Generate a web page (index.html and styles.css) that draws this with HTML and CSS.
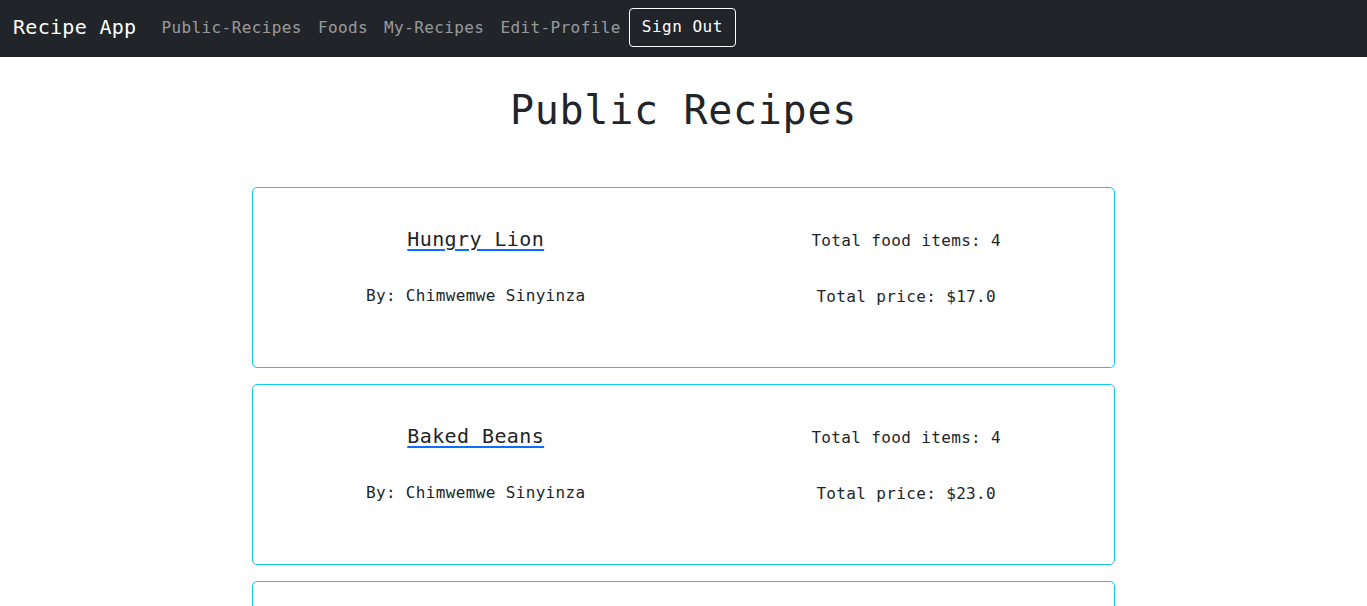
FILE: index.html
```html
<!DOCTYPE html>
<html lang="en">
<head>
<meta charset="utf-8">
<title>Recipe App</title>
<link rel="stylesheet" href="styles.css">
</head>
<body>
<nav class="navbar">
  <a class="brand" href="#">Recipe App</a>
  <ul class="nav-links">
    <li><a class="nav-link" href="#">Public-Recipes</a></li>
    <li><a class="nav-link" href="#">Foods</a></li>
    <li><a class="nav-link" href="#">My-Recipes</a></li>
    <li><a class="nav-link" href="#">Edit-Profile</a></li>
    <li><button class="btn-signout" type="button">Sign Out</button></li>
  </ul>
</nav>
<main class="main">
  <h1 class="page-title">Public Recipes</h1>
  <div class="recipe-list">
    <div class="recipe-card">
      <div class="recipe-col">
        <a class="recipe-name" href="#">Hungry Lion</a>
        <p class="recipe-text">By: Chimwemwe Sinyinza</p>
      </div>
      <div class="recipe-col recipe-col-totals">
        <p class="recipe-text">Total food items: 4</p>
        <p class="recipe-text">Total price: $17.0</p>
      </div>
    </div>
    <div class="recipe-card">
      <div class="recipe-col">
        <a class="recipe-name" href="#">Baked Beans</a>
        <p class="recipe-text">By: Chimwemwe Sinyinza</p>
      </div>
      <div class="recipe-col recipe-col-totals">
        <p class="recipe-text">Total food items: 4</p>
        <p class="recipe-text">Total price: $23.0</p>
      </div>
    </div>
    <div class="recipe-card">
      <div class="recipe-col">
        <a class="recipe-name" href="#">Pancakes</a>
        <p class="recipe-text">By: Chimwemwe Sinyinza</p>
      </div>
      <div class="recipe-col recipe-col-totals">
        <p class="recipe-text">Total food items: 3</p>
        <p class="recipe-text">Total price: $12.0</p>
      </div>
    </div>
  </div>
</main>
</body>
</html>
```

FILE: styles.css
```css
* { box-sizing: border-box; }
html, body {
  margin: 0;
  padding: 0;
  background: #fff;
  color: #212529;
  font-family: "DejaVu Sans Mono", "Liberation Mono", monospace;
  font-size: 16px;
}
.navbar {
  height: 57px;
  background: #212529;
  display: flex;
  align-items: center;
  padding: 0 12px 0 13px;
}
.brand {
  color: #fff;
  text-decoration: none;
  font-size: 20px;
  line-height: 30px;
  margin-right: 17px;
  margin-bottom: 3px;
  letter-spacing: 0.3px;
}
.nav-links {
  list-style: none;
  margin: 0;
  padding: 0;
  display: flex;
  align-items: center;
}
.nav-link {
  display: block;
  padding: 7px 8px 9px;
  color: rgba(255, 255, 255, 0.55);
  text-decoration: none;
  font-size: 16px;
  line-height: 24px;
  letter-spacing: 0.4px;
}
.btn-signout {
  height: 39px;
  width: 107px;
  padding: 0 0 2px;
  background: transparent;
  border: 1px solid #fff;
  border-radius: 4px;
  color: #fff;
  font-family: inherit;
  font-size: 16px;
  letter-spacing: 0.5px;
  cursor: pointer;
  position: relative;
  top: -1px;
}
.main {
  display: flex;
  flex-direction: column;
  align-items: center;
}
.page-title {
  margin: 29px 0 53px;
  font-size: 40px;
  line-height: 48px;
  font-weight: 500;
  letter-spacing: 0.7px;
}
.recipe-list {
  width: 863px;
  display: flex;
  flex-direction: column;
  gap: 16px;
}
.recipe-card {
  height: 181px;
  border: 1px solid #0dcaf0;
  border-radius: 5px;
  display: flex;
  justify-content: space-around;
  align-items: flex-start;
  padding: 39px 0 0;
}
.recipe-col {
  display: flex;
  flex-direction: column;
  align-items: center;
  gap: 33px;
}
.recipe-col-totals {
  padding-top: 2px;
  gap: 32px;
}
.recipe-name {
  color: #212529;
  font-size: 20px;
  line-height: 24px;
  font-weight: 500;
  text-decoration: underline;
  text-decoration-color: #0d6efd;
  text-underline-offset: 3px;
  letter-spacing: 0.4px;
}
.recipe-text {
  margin: 0;
  font-size: 16px;
  line-height: 24px;
  letter-spacing: 0.35px;
}
```
